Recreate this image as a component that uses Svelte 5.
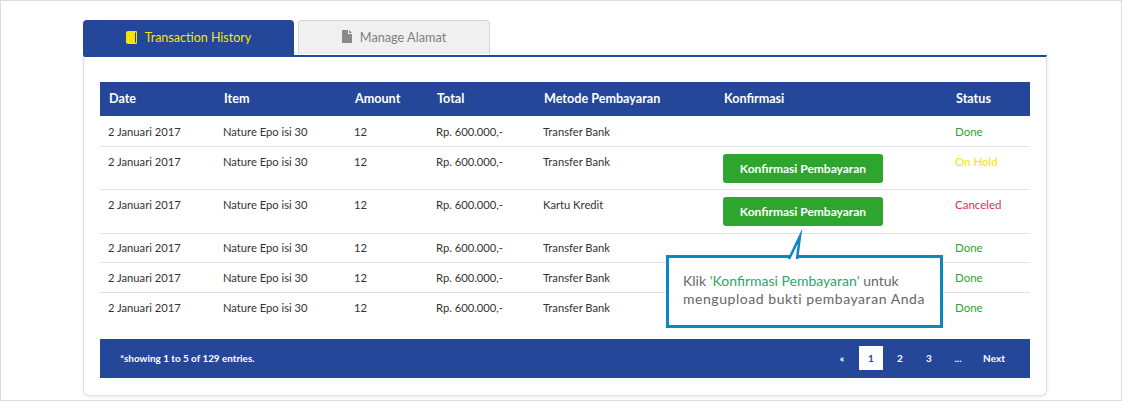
<script>
  const rows = [
    { date: '2 Januari 2017', item: 'Nature Epo isi 30', amount: 12, total: 'Rp. 600.000,-', method: 'Transfer Bank', confirm: false, status: 'Done' },
    { date: '2 Januari 2017', item: 'Nature Epo isi 30', amount: 12, total: 'Rp. 600.000,-', method: 'Transfer Bank', confirm: true, status: 'On Hold' },
    { date: '2 Januari 2017', item: 'Nature Epo isi 30', amount: 12, total: 'Rp. 600.000,-', method: 'Kartu Kredit', confirm: true, status: 'Canceled' },
    { date: '2 Januari 2017', item: 'Nature Epo isi 30', amount: 12, total: 'Rp. 600.000,-', method: 'Transfer Bank', confirm: false, status: 'Done' },
    { date: '2 Januari 2017', item: 'Nature Epo isi 30', amount: 12, total: 'Rp. 600.000,-', method: 'Transfer Bank', confirm: false, status: 'Done' },
    { date: '2 Januari 2017', item: 'Nature Epo isi 30', amount: 12, total: 'Rp. 600.000,-', method: 'Transfer Bank', confirm: false, status: 'Done' }
  ];

  const statusClass = { 'Done': 'done', 'On Hold': 'hold', 'Canceled': 'canceled' };
  const pages = ['«', '1', '2', '3', '...', 'Next'];
</script>

<div class="frame">
  <div class="tabs">
    <a class="tab active" href="#history">
      <svg width="11" height="13" viewBox="0 0 11 13" aria-hidden="true">
        <path d="M2 0h8a1 1 0 0 1 1 1v11a1 1 0 0 1-1 1H2a2 2 0 0 1-2-2V2a2 2 0 0 1 2-2z" fill="#f4e600" />
        <path d="M9 1.5h1v10H9z" fill="#24478f" />
      </svg>
      Transaction History
    </a>
    <a class="tab" href="#alamat">
      <svg width="10" height="13" viewBox="0 0 10 13" aria-hidden="true">
        <path d="M0 0h6v4h4v9H0z" fill="#8a8a8a" />
        <path d="M7 0l3 3H7z" fill="#8a8a8a" />
      </svg>
      Manage Alamat
    </a>
  </div>

  <div class="card">
    <table>
      <colgroup>
        <col style="width:115px" /><col style="width:131px" /><col style="width:82px" /><col style="width:107px" />
        <col style="width:180px" /><col style="width:232px" /><col style="width:83px" />
      </colgroup>
      <thead>
        <tr>
          <th>Date</th><th>Item</th><th>Amount</th><th>Total</th><th>Metode Pembayaran</th><th>Konfirmasi</th><th>Status</th>
        </tr>
      </thead>
      <tbody>
        {#each rows as r}
          <tr>
            <td>{r.date}</td>
            <td>{r.item}</td>
            <td>{r.amount}</td>
            <td>{r.total}</td>
            <td>{r.method}</td>
            <td class="confirm">
              {#if r.confirm}<button>Konfirmasi Pembayaran</button>{/if}
            </td>
            <td class={statusClass[r.status]}>{r.status}</td>
          </tr>
        {/each}
      </tbody>
    </table>

    <div class="foot">
      <span class="entries">*showing 1 to 5 of 129 entries.</span>
      <nav class="pager" aria-label="Pagination">
        {#each pages as p}
          <a href="#page" class:current={p === '1'}>{p}</a>
        {/each}
      </nav>
    </div>

    <div class="callout">
      <svg class="tail" width="28" height="28" viewBox="0 0 28 28" aria-hidden="true">
        <path d="M1 27 L12 4 L9 27" fill="#fff" stroke="#0b87c3" stroke-width="2.5" stroke-miterlimit="10" />
      </svg>
      <p>Klik <em>'Konfirmasi Pembayaran'</em> untuk <span>mengupload bukti pembayaran Anda</span></p>
    </div>
  </div>
</div>

<style>
  :global(body) { background: #fff; }
  .frame {
    box-sizing: border-box; width: 1122px; height: 401px; overflow: hidden;
    padding: 19px 74px 0 82px; border: 1px solid #dcdcdc;
    font-family: "Lato", "Open Sans", sans-serif; color: #333;
  }

  .tabs { display: flex; gap: 4px; align-items: flex-start; }
  .tab {
    box-sizing: border-box; display: flex; align-items: center; justify-content: center; gap: 8px;
    width: 192px; height: 34px; padding-bottom: 2px; border: 1px solid #d6d6d6; border-bottom: 0; border-radius: 4px 4px 0 0;
    background: #f0f0f0; color: #808080; font-size: 12.7px; text-decoration: none;
  }
  .tab.active { width: 211px; height: 35px; background: #24479a; border-color: #24479a; color: #f4e600; font-size: 12.5px; }

  .card {
    position: relative; box-sizing: border-box; height: 341px; padding: 25px 16px 0;
    border: 1px solid #dfdfdf; border-top: 2px solid #24479a; border-radius: 0 0 6px 6px;
    box-shadow: 0 1px 4px rgba(0,0,0,.08); background: #fff;
  }

  table { width: 930px; border-collapse: collapse; table-layout: fixed; font-size: 11.2px; }
  th {
    height: 34px; padding: 0 9px 2px; box-sizing: border-box; background: #24479a; color: #fff; font-size: 12.6px; font-weight: 700; text-align: left;
  }
  td { height: 30px; box-sizing: border-box; padding: 8px 8px 7px; line-height: 13px; vertical-align: top; border-bottom: 1px solid #e2e2e2; color: #333; }
  tbody tr:first-child td { padding-top: 9px; padding-bottom: 6px; }
  tbody tr:nth-child(4) td { height: 29px; padding-top: 7px; }
  tbody tr:last-child td { border-bottom: 0; }
  td.confirm { padding-top: 7px; padding-bottom: 6px; }
  td.done { color: #2ea52f; font-size: 11.5px; }
  td.hold { color: #f4e600; font-size: 11.5px; }
  td.canceled { color: #e5304f; font-size: 11.5px; }

  button {
    display: block; width: 160px; height: 29px; border: 0; border-radius: 3px; background: #2ea52f; color: #fff;
    font: 700 12px "Lato", "Open Sans", sans-serif; cursor: pointer;
  }
  tr:nth-child(3) td.confirm { padding-bottom: 7px; }

  .foot {
    display: flex; align-items: center; justify-content: space-between; width: 930px; height: 39px;
    margin-top: 17px; background: #24479a; color: #fff; box-sizing: border-box; padding: 0 24px 2px 20px;
  }
  .entries { font-size: 9.9px; font-weight: 700; }
  .pager { display: flex; align-items: center; gap: 5px; }
  .pager a {
    min-width: 24px; height: 24px; display: flex; align-items: center; justify-content: center;
    color: #fff; font-size: 10px; font-weight: 700; text-decoration: none;
  }
  .pager a:last-child { margin-left: 7px; }
  .pager a.current { background: #fff; color: #24479a; }

  .callout {
    position: absolute; left: 582px; top: 198px; box-sizing: border-box; width: 277px; height: 73px;
    padding: 14px 14px; border: 3px solid #0b87c3; background: #fff;
  }
  .tail { position: absolute; left: 119px; top: -26px; overflow: visible; }
  .callout p { margin: 0; font-size: 14px; line-height: 18px; color: #666; }
  .callout em { font-style: normal; color: #2ea56a; }
  .callout span { display: block; letter-spacing: .55px; white-space: nowrap; }
</style>
